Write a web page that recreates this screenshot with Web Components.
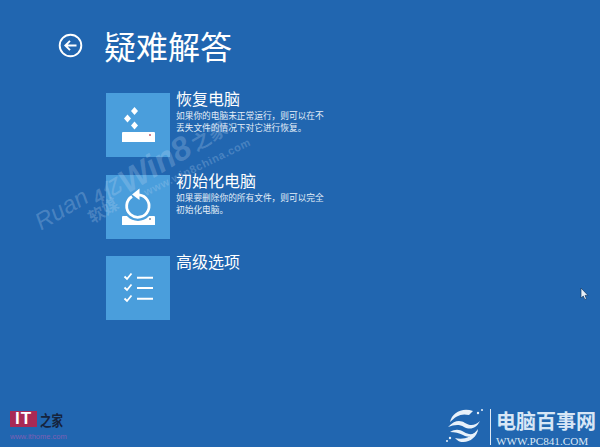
<!DOCTYPE html>
<html lang="zh">
<head>
<meta charset="utf-8">
<title>疑难解答</title>
<style>
  html, body { margin: 0; height: 100%; }
  body { font-family: "Noto Sans CJK SC", "Liberation Sans", sans-serif; color: white; background: #2166b0; overflow: hidden; }
  [slot="icon"] { display: block; }
</style>
</head>
<body>
<recovery-screen>
  <page-title slot="header">疑难解答</page-title>

  <option-row name="恢复电脑">
    <svg slot="icon" width="64" height="64" viewBox="0 0 64 64">
      <path d="M28.500 14l3.500 4-3.500 4-3.500-4zM21.500 21.500l3.500 4-3.500 4-3.500-4zM28.500 28.500l3.500 4-3.500 4-3.500-4z" fill="#fff"/>
      <path d="M17 39h31a1 1 0 0 1 1 1v9H16v-9a1 1 0 0 1 1-1z" fill="#fff"/>
      <circle cx="44" cy="42" r="1" fill="#c65a6a"/>
    </svg>
    如果你的电脑未正常运行，则可以在不<br>丢失文件的情况下对它进行恢复。
  </option-row>

  <option-row name="初始化电脑">
    <svg slot="icon" width="64" height="64" viewBox="0 0 64 64">
      <path d="M17 41h31a1 1 0 0 1 1 1v8H16v-8a1 1 0 0 1 1-1z" fill="#fff"/>
      <circle cx="44" cy="44" r="1" fill="#7a8fa8"/>
      <circle cx="32" cy="31" r="12.500" fill="none" stroke="#4a9edc" stroke-width="5"/>
      <path d="M26 21.500a11.200 11.200 0 1 0 7-1.600" fill="none" stroke="#fff" stroke-width="2.800"/>
      <path d="M33.500 13.500v11.500l-7.500-5.500z" fill="#fff"/>
    </svg>
    如果要删除你的所有文件，则可以完全<br>初始化电脑。
  </option-row>

  <option-row name="高级选项">
    <svg slot="icon" width="64" height="64" viewBox="0 0 64 64" fill="none" stroke="#fff">
      <path d="M18.500 20.500l2.500 2.500 4.500-5.500M18.500 31.500l2.500 2.500 4.500-5.500M18.500 42.500l2.500 2.500 4.500-5.500" stroke-width="1.800"/>
      <path d="M31 21.700h16M31 32h16M31 42.700h16" stroke-width="2"/>
    </svg>
  </option-row>

  <ithome-mark slot="footer"></ithome-mark>
  <pc841-mark slot="footer"></pc841-mark>
</recovery-screen>

<script>
const screenTemplate = document.createElement('template')
screenTemplate.innerHTML = `
  <style>
    :host {
      display: flex;
      flex-direction: column;
      position: relative;
      box-sizing: border-box;
      width: 600px;
      height: 447px;
      overflow: hidden;
      background: #2166b0;
    }
    .list {
      display: flex;
      flex-direction: column;
      gap: 17.5px;
      margin: 23px 0 0 106px;
    }
    .footer {
      display: flex;
      justify-content: space-between;
      align-items: flex-end;
      margin-top: auto;
      padding: 0 4px 0 10px;
    }
    .marks {
      position: absolute;
      inset: 0;
      pointer-events: none;
      color: rgba(190, 215, 240, .26);
      font-family: "Liberation Sans", "Noto Sans CJK SC", sans-serif;
    }
    .marks span { position: absolute; white-space: nowrap; transform-origin: left bottom; transform: rotate(-31deg); }
    .ruan { left: 44px; top: 208px; font-size: 24px; font-style: italic; }
    .qi { left: 100px; top: 182px; font-size: 19px; font-weight: bold; font-style: italic; }
    .soft { left: 95px; top: 204px; font-size: 16px; font-weight: bold; }
    .win { left: 131px; top: 163px; font-size: 33px; font-weight: bold; font-style: italic; }
    .home { left: 199px; top: 129px; font-size: 19px; font-weight: bold; }
    .marks .url { left: 147px; top: 186px; font-size: 11px; font-weight: bold; letter-spacing: .6px; transform: rotate(-26deg); }
    .cursor { position: absolute; left: 580px; top: 288px; }
  </style>
  <slot name="header"></slot>
  <div class="list"><slot></slot></div>
  <div class="footer"><slot name="footer"></slot></div>
  <div class="marks">
    <span class="ruan">Ruan</span>
    <span class="qi">4亿</span>
    <span class="soft">软媒</span>
    <span class="win">Win8</span>
    <span class="home">之家</span>
    <span class="url">www.win8china.com</span>
  </div>
  <svg class="cursor" width="9" height="13" viewBox="0 0 9 13">
    <path d="M1 0v10l2.300-2 1.500 3.500 1.700-.7L5 7.400h3z" fill="#e8f0f8" stroke="#123a66" stroke-width=".7"/>
  </svg>
`

class RecoveryScreen extends HTMLElement {
  constructor() {
    super()
      .attachShadow({ mode: "open" })
      .append(screenTemplate.content.cloneNode(true))
  }
}

const titleTemplate = document.createElement('template')
titleTemplate.innerHTML = `
  <style>
    :host {
      display: flex;
      align-items: center;
      gap: 21px;
      padding: 20px 0 0 58px;
      height: 50px;
    }
    svg { flex: none; }
    h1 {
      margin: 0;
      font-size: 32px;
      line-height: 50px;
      font-weight: 400;
      color: #fff;
    }
  </style>
  <svg width="25" height="25" viewBox="0 0 25 25" fill="none" stroke="#fff">
    <circle cx="12.500" cy="12.500" r="10.800" stroke-width="1.900"/>
    <path d="M18.500 12.500H7.500M12 7.800l-4.700 4.700 4.700 4.700" stroke-width="1.900"/>
  </svg>
  <h1><slot></slot></h1>
`

class PageTitle extends HTMLElement {
  constructor() {
    super()
      .attachShadow({ mode: "open" })
      .append(titleTemplate.content.cloneNode(true))
  }
}

const rowTemplate = document.createElement('template')
rowTemplate.innerHTML = `
  <style>
    :host {
      display: grid;
      grid-template-columns: 64px 1fr;
      column-gap: 6px;
      height: 64px;
    }
    .tile { width: 64px; height: 64px; background: #4a9edc; }
    .name {
      font-size: 16px;
      line-height: 20px;
      margin-top: -5px;
      color: #fff;
    }
    .desc {
      font-size: 8.700px;
      line-height: 12px;
      margin-top: 2px;
      color: #e4eef8;
    }
  </style>
  <div class="tile"><slot name="icon"></slot></div>
  <div>
    <div class="name" id="name"></div>
    <div class="desc"><slot></slot></div>
  </div>
`

class OptionRow extends HTMLElement {
  constructor() {
    super()
      .attachShadow({ mode: "open" })
      .append(rowTemplate.content.cloneNode(true))
  }

  connectedCallback() {
    this.shadowRoot.querySelector('#name').textContent = this.getAttribute('name')
  }
}

const ithomeTemplate = document.createElement('template')
ithomeTemplate.innerHTML = `
  <style>
    :host { display: grid; grid-template-columns: 27px auto; column-gap: 3px; row-gap: 5px; align-items: center; width: 56px; margin-bottom: 6px; }
    .it {
      background: #a92a55;
      color: #fff;
      font: bold 17px/16px "Liberation Sans", sans-serif;
      text-align: center;
      letter-spacing: 1px;
    }
    .zh { font: bold 11.500px/16px "Noto Sans CJK SC", sans-serif; color: #15233d; white-space: nowrap; display: block; transform: scaleY(1.3); }
    .url { grid-column: span 2; font: 7.500px/9px "Liberation Sans", sans-serif; color: #7d5fb4; white-space: nowrap; }
  </style>
  <div class="it">IT</div>
  <div class="zh">之家</div>
  <div class="url">www.ithome.com</div>
`

class IthomeMark extends HTMLElement {
  constructor() {
    super()
      .attachShadow({ mode: "open" })
      .append(ithomeTemplate.content.cloneNode(true))
  }
}

const pcTemplate = document.createElement('template')
pcTemplate.innerHTML = `
  <style>
    :host { display: flex; align-items: flex-start; height: 40px; }
    svg { margin: 0 5px 0 0; flex: none; }
    .bar { width: 1px; height: 36px; margin: 2px 5px 0 0; background: #dfe9f4; }
    .zh { font: bold 20px/23px "Noto Sans CJK SC", sans-serif; color: #d7e6f6; white-space: nowrap; margin-top: 2px; }
    .url { font: 11.200px/12px "Liberation Serif", serif; color: #dce8f5; white-space: nowrap; margin-top: 3px; }
  </style>
  <svg width="41" height="36" viewBox="0 0 41 36" fill="#e8f1fa">
    <path d="M6 15C8 6 18 0 29 4l-4 4C17 6 12 9 6 15z"/>
    <path d="M4 20c7-7 12-7 17-4s10 3 15-2c-4 8-10 9-16 6-5-3-10-2-16 0z"/>
    <path d="M6 25c5-3 9-3 14 0s9 3 14-1c-4 6-10 7-15 4-4-2-8-3-13-3z"/>
    <path d="M11 31c8 2 16 0 23-9-1 11-16 18-23 9z"/>
    <circle cx="34" cy="6" r="1.200"/>
    <circle cx="38" cy="3" r="1"/>
    <circle cx="6" cy="31" r="1.200"/>
    <circle cx="3" cy="34" r="1"/>
  </svg>
  <div class="bar"></div>
  <div>
    <div class="zh">电脑百事网</div>
    <div class="url">WWW.PC841.COM</div>
  </div>
`

class Pc841Mark extends HTMLElement {
  constructor() {
    super()
      .attachShadow({ mode: "open" })
      .append(pcTemplate.content.cloneNode(true))
  }
}

window.customElements.define('recovery-screen', RecoveryScreen)
window.customElements.define('page-title', PageTitle)
window.customElements.define('option-row', OptionRow)
window.customElements.define('ithome-mark', IthomeMark)
window.customElements.define('pc841-mark', Pc841Mark)
</script>
</body>
</html>
